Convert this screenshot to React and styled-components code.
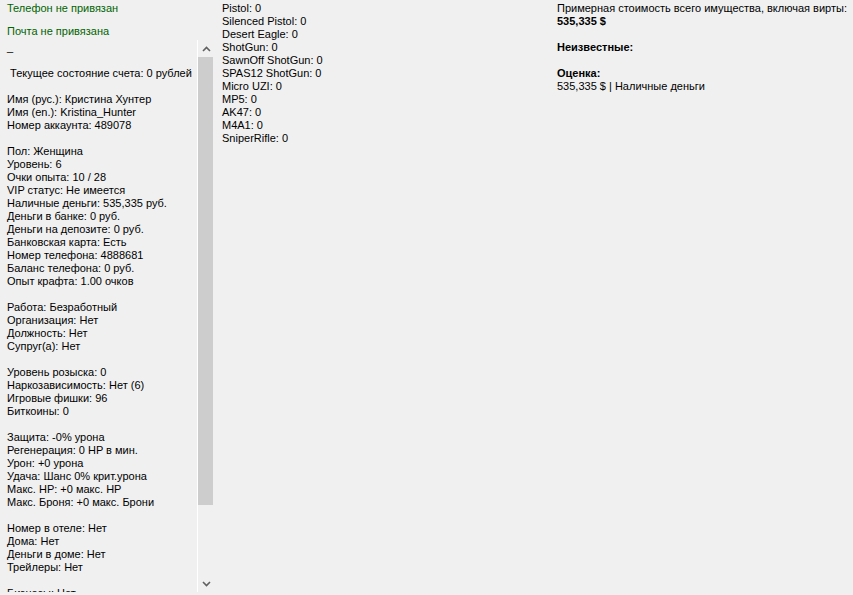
import React from 'react';
import styled, { createGlobalStyle, css } from 'styled-components';

const GlobalStyle = createGlobalStyle`
	html, body {
		margin: 0;
		padding: 0;
		background: #f0f0f0;
	}
	body {
		font-family: "Liberation Sans", Arial, sans-serif;
		font-size: 11px;
		line-height: 13px;
		color: #000;
	}
`;

const Page = styled.div`
	display: flex;
	width: 853px;
	height: 595px;
	overflow: hidden;
`;

const LeftPanel = styled.div`
	width: 215px;
	display: flex;
	flex-direction: column;
	padding-top: 2px;
`;

const Status = styled.div`
	color: #006400;
	padding-left: 7px;
	height: 13px;
	& + & {
		margin-top: 10px;
	}
`;

const InfoBox = styled.div`
	margin-top: 2px;
	height: 552px;
	display: flex;
`;

const InfoText = styled.div`
	flex: 1;
	overflow: hidden;
	padding: 1px 0 0 7px;
	white-space: pre;
`;

const Line = styled.div`
	height: 13px;
	${({ bold }) => bold && css`
		font-weight: bold;
	`}
`;

const ScrollBar = styled.div`
	width: 17px;
	border-left: 1px solid #fff;
	display: flex;
	flex-direction: column;
`;

const Arrow = styled.div`
	height: 17px;
	display: flex;
	align-items: center;
	justify-content: center;
	color: #606060;
`;

const Track = styled.div`
	flex: 1;
	display: flex;
	flex-direction: column;
`;

const Thumb = styled.div`
	width: 15px;
	height: 448px;
	background: #cdcdcd;
`;

const Column = styled.div`
	padding-top: 2px;
	white-space: pre;
	${({ width }) => width && css`
		width: ${width}px;
	`}
	${({ left }) => css`
		margin-left: ${left}px;
	`}
`;

const Chevron = ({ down }) => (
	<svg width="9" height="6" viewBox="0 0 9 6">
		<path
			d={down ? 'M1 1 L4.5 4.5 L8 1' : 'M1 5 L4.5 1.5 L8 5'}
			fill="none"
			stroke="currentColor"
			strokeWidth="1.6"
		/>
	</svg>
);

const info = [
	'_',
	'',
	' Текущее состояние счета: 0 рублей',
	'',
	'Имя (рус.): Кристина Хунтер',
	'Имя (en.): Kristina_Hunter',
	'Номер аккаунта: 489078',
	'',
	'Пол: Женщина',
	'Уровень: 6',
	'Очки опыта: 10 / 28',
	'VIP статус: Не имеется',
	'Наличные деньги: 535,335 руб.',
	'Деньги в банке: 0 руб.',
	'Деньги на депозите: 0 руб.',
	'Банковская карта: Есть',
	'Номер телефона: 4888681',
	'Баланс телефона: 0 руб.',
	'Опыт крафта: 1.00 очков',
	'',
	'Работа: Безработный',
	'Организация: Нет',
	'Должность: Нет',
	'Супруг(а): Нет',
	'',
	'Уровень розыска: 0',
	'Наркозависимость: Нет (6)',
	'Игровые фишки: 96',
	'Биткоины: 0',
	'',
	'Защита: -0% урона',
	'Регенерация: 0 HP в мин.',
	'Урон: +0 урона',
	'Удача: Шанс 0% крит.урона',
	'Макс. HP: +0 макс. HP',
	'Макс. Броня: +0 макс. Брони',
	'',
	'Номер в отеле: Нет',
	'Дома: Нет',
	'Деньги в доме: Нет',
	'Трейлеры: Нет',
	'',
	'Бизнесы: Нет',
];

const weapons = [
	'Pistol: 0',
	'Silenced Pistol: 0',
	'Desert Eagle: 0',
	'ShotGun: 0',
	'SawnOff ShotGun: 0',
	'SPAS12 ShotGun: 0',
	'Micro UZI: 0',
	'MP5: 0',
	'AK47: 0',
	'M4A1: 0',
	'SniperRifle: 0',
];

const estimate = [
	{ text: 'Примерная стоимость всего имущества, включая вирты:' },
	{ text: '535,335 $', bold: true },
	{ text: '' },
	{ text: 'Неизвестные:', bold: true },
	{ text: '' },
	{ text: 'Оценка:', bold: true },
	{ text: '535,335 $ | Наличные деньги' },
];

function App() {
	return (
		<>
			<GlobalStyle />
			<Page>
				<LeftPanel>
					<Status>Телефон не привязан</Status>
					<Status>Почта не привязана</Status>
					<InfoBox>
						<InfoText>
							{info.map((line, i) => (
								<Line key={i}>{line}</Line>
							))}
						</InfoText>
						<ScrollBar>
							<Arrow>
								<Chevron />
							</Arrow>
							<Track>
								<Thumb />
							</Track>
							<Arrow>
								<Chevron down />
							</Arrow>
						</ScrollBar>
					</InfoBox>
				</LeftPanel>
				<Column left={7} width={335}>
					{weapons.map((line, i) => (
						<Line key={i}>{line}</Line>
					))}
				</Column>
				<Column left={0}>
					{estimate.map((line, i) => (
						<Line key={i} bold={line.bold}>{line.text}</Line>
					))}
				</Column>
			</Page>
		</>
	);
}

export default App;
